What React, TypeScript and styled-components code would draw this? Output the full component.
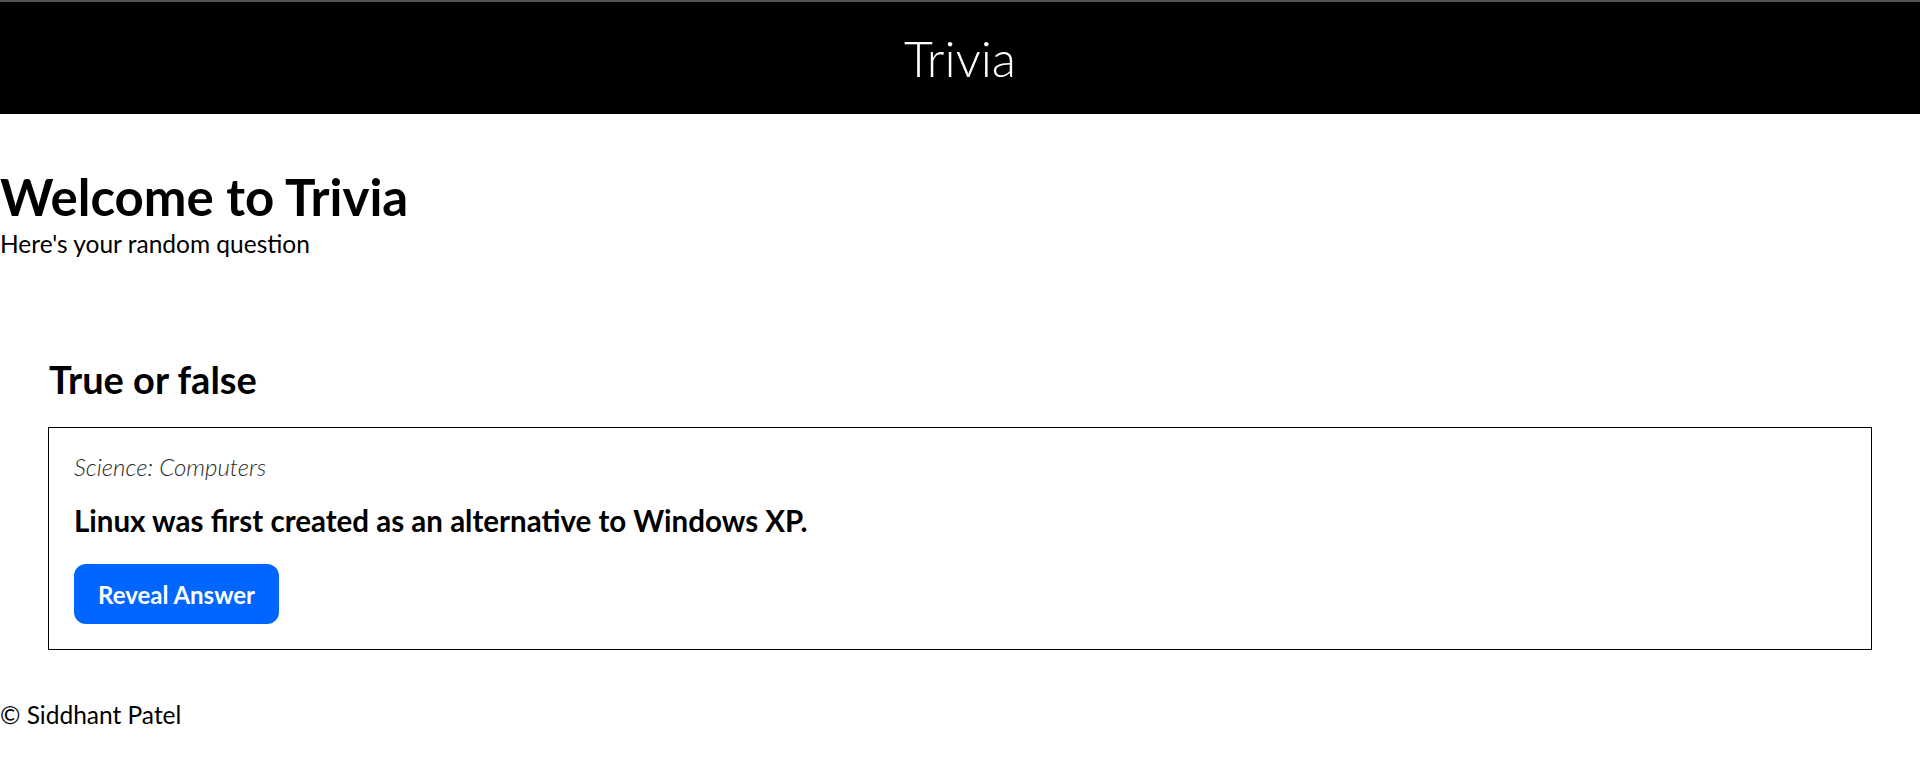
import React from 'react';
import styled, { createGlobalStyle } from 'styled-components';

const GlobalStyle = createGlobalStyle`
  html, body {
    margin: 0;
    padding: 0;
    background: #fff;
    color: #000;
    font-family: Lato, "Noto Sans", sans-serif;
  }
  * {
    box-sizing: border-box;
  }
`;

const SCHeader = styled.header`
  height: 114px;
  border-top: 2px solid #555;
  background: #000;
  color: #fff;
  display: flex;
  align-items: center;
  justify-content: center;
  font-size: 50px;
  font-weight: 300;
  line-height: 1;
`;

const SCIntro = styled.section`
  padding-top: 52px;
`;

const SCTitle = styled.h1`
  margin: 0;
  font-size: 51px;
  font-weight: 700;
  line-height: 62px;
`;

const SCLead = styled.p`
  margin: 2px 0 0;
  font-size: 24.5px;
  line-height: 28px;
`;

const SCQuestionSection = styled.section`
  padding: 100px 48px 0;
`;

const SCSectionTitle = styled.h2`
  margin: 0 0 26px 1px;
  font-size: 38px;
  font-weight: 700;
  line-height: 43px;
`;

const SCCard = styled.div`
  border: 1px solid #000;
  padding: 25px;
  display: flex;
  flex-direction: column;
  align-items: flex-start;
`;

const SCCategory = styled.div`
  font-size: 24px;
  font-style: italic;
  font-weight: 300;
  line-height: 28px;
  color: #2a2a2a;
`;

const SCQuestion = styled.div`
  margin-top: 23px;
  font-size: 29.5px;
  font-weight: 700;
  line-height: 34px;
`;

const SCButton = styled.button`
  margin-top: 26px;
  height: 60px;
  padding: 0 24px;
  border: 0;
  border-radius: 12px;
  background: #0066ff;
  color: #fff;
  font-family: inherit;
  font-size: 24px;
  font-weight: 700;
  cursor: pointer;
`;

const SCFooter = styled.footer`
  margin-top: 51px;
  font-size: 24.5px;
  line-height: 28px;
`;

export default function App() {
  return (
    <>
      <GlobalStyle />
      <SCHeader>Trivia</SCHeader>
      <SCIntro>
        <SCTitle>Welcome to Trivia</SCTitle>
        <SCLead>Here's your random question</SCLead>
      </SCIntro>
      <SCQuestionSection>
        <SCSectionTitle>True or false</SCSectionTitle>
        <SCCard>
          <SCCategory>Science: Computers</SCCategory>
          <SCQuestion>Linux was first created as an alternative to Windows XP.</SCQuestion>
          <SCButton>Reveal Answer</SCButton>
        </SCCard>
      </SCQuestionSection>
      <SCFooter>© Siddhant Patel</SCFooter>
    </>
  );
}
